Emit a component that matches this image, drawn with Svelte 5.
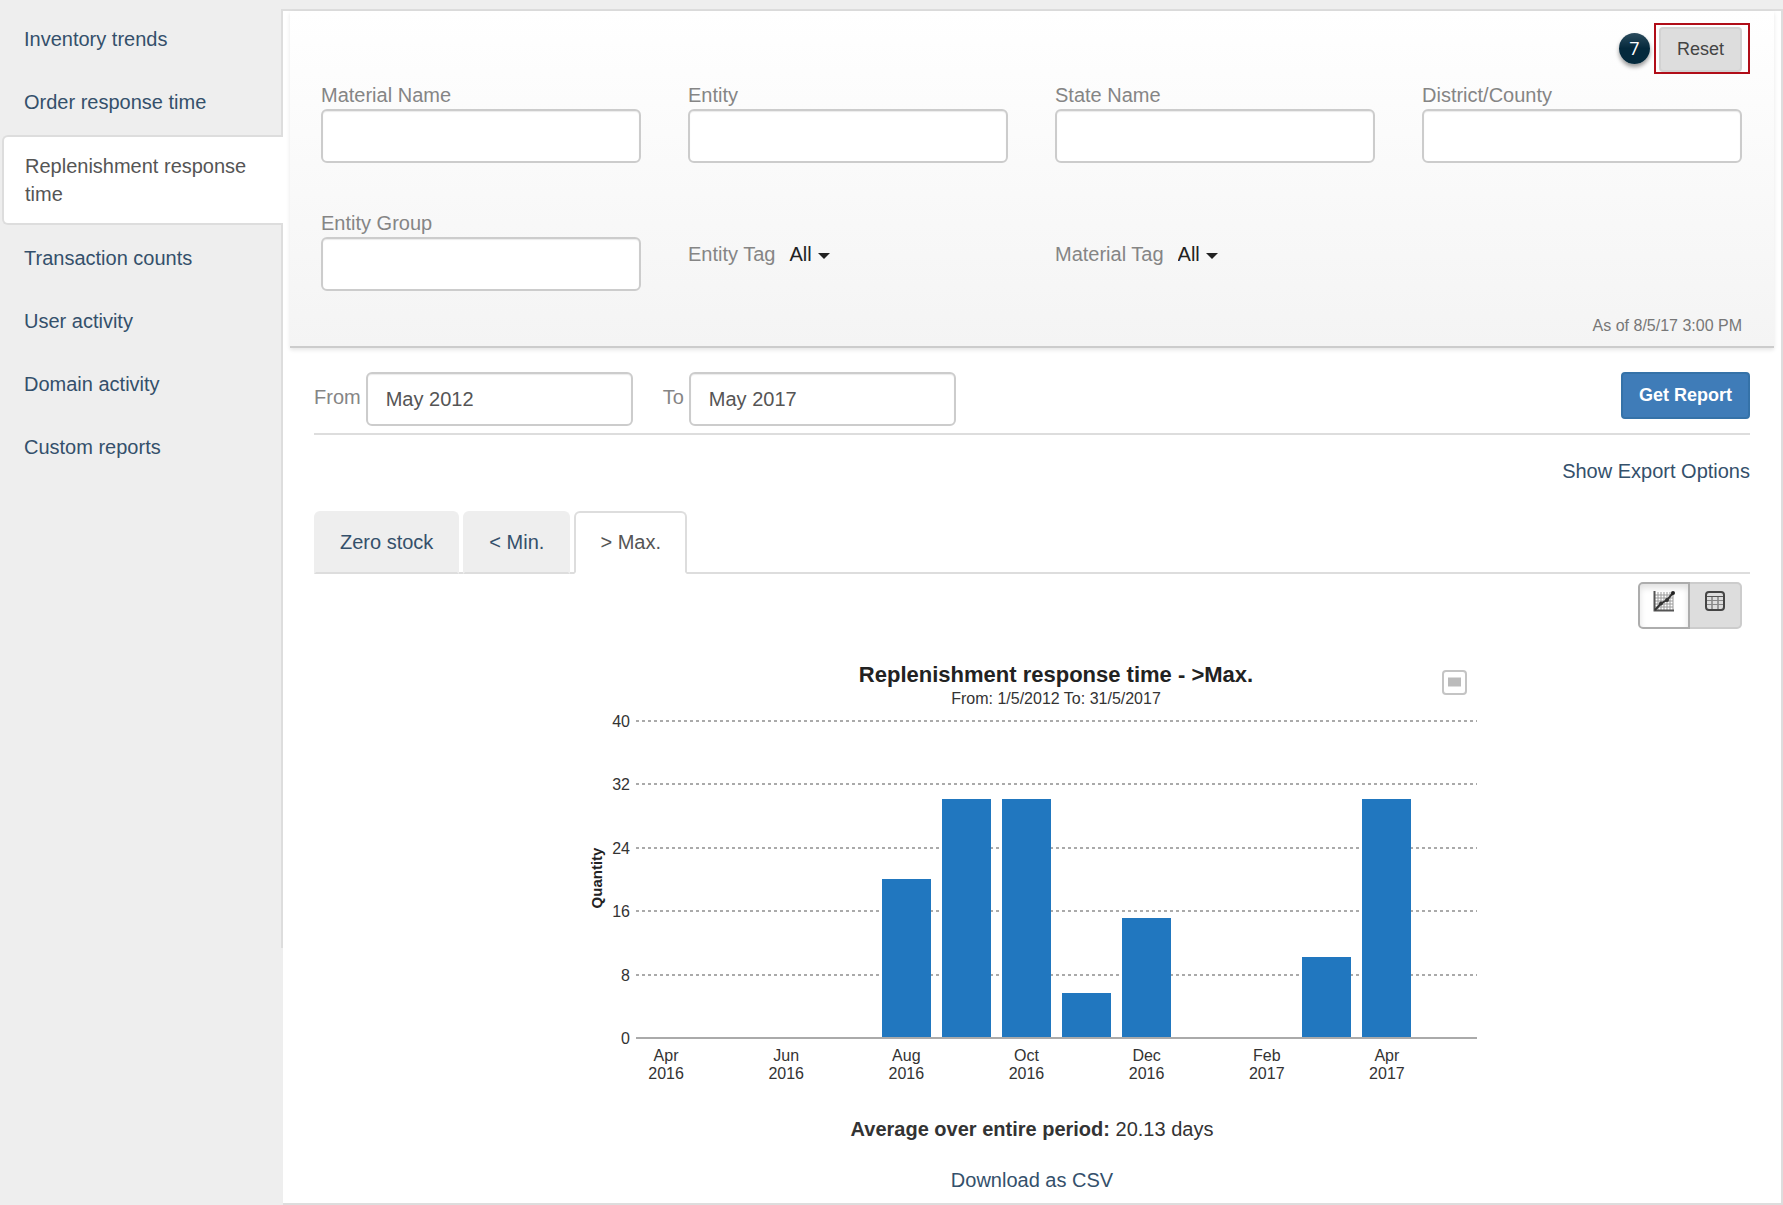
<script>
  const reports = [
    'Inventory trends',
    'Order response time',
    'Replenishment response time',
    'Transaction counts',
    'User activity',
    'Domain activity',
    'Custom reports',
  ];
  const stockTabs = ['Zero stock', '< Min.', '> Max.'];

  let report = $state('Replenishment response time');
  let stockTab = $state('> Max.');
  let view = $state('chart');
  let from = $state('May 2012');
  let to = $state('May 2017');

  const series = [
    { month: 'Apr', year: 2016, value: 0 },
    { month: 'May', year: 2016, value: 0 },
    { month: 'Jun', year: 2016, value: 0 },
    { month: 'Jul', year: 2016, value: 0 },
    { month: 'Aug', year: 2016, value: 20.1 },
    { month: 'Sep', year: 2016, value: 30.1 },
    { month: 'Oct', year: 2016, value: 30.1 },
    { month: 'Nov', year: 2016, value: 5.7 },
    { month: 'Dec', year: 2016, value: 15.1 },
    { month: 'Jan', year: 2017, value: 0 },
    { month: 'Feb', year: 2017, value: 0 },
    { month: 'Mar', year: 2017, value: 10.2 },
    { month: 'Apr', year: 2017, value: 30.1 },
    { month: 'May', year: 2017, value: 0 },
  ];

  const plot = { left: 54, right: 895, top: 70, bottom: 387 };
  const ticks = [0, 8, 16, 24, 32, 40];
  const step = (plot.right - plot.left) / series.length;
  const barWidth = 49;

  const y = (v) => Math.round(plot.bottom - (v / 40) * (plot.bottom - plot.top));
  const cx = (i) => plot.left + step * (i + 0.5);

  function go(e, fn) {
    e.preventDefault();
    fn();
  }
</script>

<div class="layout">
  <nav class="sidebar">
    {#each reports as r}
      <a href="#report" class="report" class:active={r === report} onclick={(e) => go(e, () => (report = r))}>{r}</a>
    {/each}
  </nav>

  <main class="content">
    <form class="filters" onsubmit={(e) => e.preventDefault()}>
      <div class="reset-row">
        <span class="callout">7</span>
        <div class="highlight">
          <button type="reset" class="btn">Reset</button>
        </div>
      </div>

      <div class="fields">
        <div class="field"><label for="material">Material Name</label><input id="material" type="text" /></div>
        <div class="field"><label for="entity">Entity</label><input id="entity" type="text" /></div>
        <div class="field"><label for="state">State Name</label><input id="state" type="text" /></div>
        <div class="field"><label for="district">District/County</label><input id="district" type="text" /></div>
        <div class="field"><label for="group">Entity Group</label><input id="group" type="text" /></div>
        <div class="tag">
          <label for="entity-tag">Entity Tag</label>
          <select id="entity-tag"><option>All</option></select>
          <span class="caret"></span>
        </div>
        <div class="tag">
          <label for="material-tag">Material Tag</label>
          <select id="material-tag"><option>All</option></select>
          <span class="caret"></span>
        </div>
      </div>

      <p class="as-of">As of 8/5/17 3:00 PM</p>
    </form>

    <div class="body">
      <div class="period">
        <div class="date"><label for="from">From</label><input id="from" type="text" bind:value={from} /></div>
        <div class="date"><label for="to">To</label><input id="to" type="text" bind:value={to} /></div>
        <button type="button" class="btn primary">Get Report</button>
      </div>

      <div class="export"><a href="#export">Show Export Options</a></div>

      <div class="tabs">
        {#each stockTabs as t}
          <a href="#tab" class="tab" class:active={t === stockTab} onclick={(e) => go(e, () => (stockTab = t))}>{t}</a>
        {/each}
      </div>

      <div class="views">
        <button type="button" class="view" class:active={view === 'chart'} aria-label="Chart view" onclick={() => (view = 'chart')}>
          <svg width="22" height="22" viewBox="0 0 22 22" fill="none" stroke="#333">
            <path d="M5 2v18M8 2v18M11 2v18M14 2v18M17 2v18M20 5v15M2 5h18M2 8h18M2 11h18M2 14h18M2 17h18" stroke="#999" />
            <path d="M1.5 1v19.5H21" stroke="#555" stroke-width="2" />
            <path d="M2 20L8 13.500 14 10 20 3" stroke-width="2" />
            <circle cx="8" cy="13.5" r="2" fill="#333" stroke="none" />
            <circle cx="14" cy="10" r="2" fill="#333" stroke="none" />
            <circle cx="20" cy="3" r="2" fill="#222" stroke="none" />
          </svg>
        </button>
        <button type="button" class="view" class:active={view === 'table'} aria-label="Table view" onclick={() => (view = 'table')}>
          <svg width="22" height="22" viewBox="0 0 22 22" fill="none" stroke="#444">
            <rect x="2" y="2" width="18" height="18" rx="3" stroke-width="2" />
            <path d="M3 6.5h16M8 7v12M14 7v12" stroke="#555" />
            <path d="M3 10.5h16M3 14.500h16" stroke="#888" />
          </svg>
        </button>
      </div>

      <svg class="chart" viewBox="0 0 900 440" role="img" aria-label="Replenishment response time">
        <text class="title" x="474" y="31">Replenishment response time - &gt;Max.</text>
        <text class="label middle" x="474" y="53">From: 1/5/2012 To: 31/5/2017</text>

        <g class="menu">
          <rect x="861" y="20" width="23" height="23" rx="3" fill="#fff" stroke="#c4c4c4" stroke-width="2" />
          <path d="M866 28h13M866 31h13M866 34h13" stroke="#bbb" stroke-width="3" />
        </g>

        {#each ticks as t}
          <text class="label end" x="48" y={y(t) + 6}>{t}</text>
          {#if t > 0}
            <line class="grid" x1={plot.left} x2={plot.right} y1={y(t)} y2={y(t)} />
          {/if}
        {/each}

        <text class="axis" transform="translate(20 227) rotate(-90)">Quantity</text>

        {#each series as p, i}
          {#if p.value > 0}
            <rect class="bar" x={Math.round(cx(i) - barWidth / 2)} y={y(p.value)} width={barWidth} height={plot.bottom - y(p.value)} />
          {/if}
          {#if i % 2 === 0}
            <text class="label middle" x={cx(i)} y="410">{p.month}</text>
            <text class="label middle" x={cx(i)} y="428">{p.year}</text>
          {/if}
        {/each}
        <line class="base" x1={plot.left} x2={plot.right} y1={plot.bottom} y2={plot.bottom} />
      </svg>

      <p class="average"><strong>Average over entire period:</strong> 20.13 days</p>
      <div class="download"><a href="#csv">Download as CSV</a></div>
    </div>
  </main>
</div>

<style>
  :global(body) {
    margin: 0;
    background: #eee;
  }

  .layout {
    display: grid;
    grid-template-columns: 283px 1fr;
    padding: 9px 0 1px;
    font-family: 'Liberation Sans', Arial, sans-serif;
    font-size: 20px;
    line-height: 28px;
    color: #333;
  }
  .layout * { box-sizing: border-box; }
  p { margin: 0; }
  a {
    color: #34506b;
    text-decoration: none;
  }
  label { color: #858585; }
  input, select, button {
    font-family: inherit;
    font-size: inherit;
    line-height: inherit;
  }

  .sidebar {
    display: flex;
    flex-direction: column;
    gap: 3px;
    align-self: start;
    padding: 0 0 471px 2px;
    border-right: 2px solid #ddd;
  }
  .report {
    padding: 14px 20px;
    border: 2px solid transparent;
  }
  .report.active {
    margin-right: -2px;
    padding: 15px 21px;
    background: #fff;
    border-color: #ddd;
    border-right: 0;
    border-radius: 6px 0 0 6px;
    color: #555;
  }

  .content {
    padding: 0 7px;
    background: #fff;
    border: 2px solid #ddd;
    border-left: 0;
  }

  .filters {
    padding: 12px 24px 8px;
    background: linear-gradient(#fff, #f4f4f4);
    border-bottom: 2px solid #ccc;
    box-shadow: 0 2px 4px rgba(0, 0, 0, 0.1);
  }
  .reset-row {
    display: flex;
    justify-content: flex-end;
    align-items: center;
    gap: 4px;
  }
  .callout {
    width: 31px;
    height: 31px;
    border-radius: 50%;
    background: linear-gradient(#2c4c5e, #04293c 50%);
    box-shadow: 0 3px 4px rgba(0, 0, 0, 0.4);
    color: #fff;
    font-family: 'Open Sans', sans-serif;
    font-size: 18px;
    line-height: 31px;
    text-align: center;
  }
  .highlight {
    padding: 2px 6px 0 3px;
    border: 2px solid #b00d18;
  }
  .btn {
    display: block;
    padding: 7px 16px;
    border: 2px solid #d2d2d2;
    border-radius: 4px;
    background: #ddd;
    color: #444;
    font-size: 18px;
    line-height: 27px;
  }

  .fields {
    display: grid;
    grid-template-columns: repeat(4, 1fr);
    gap: 46px 47px;
    margin: 7px 8px 0 7px;
  }
  .field {
    display: flex;
    flex-direction: column;
  }
  input {
    height: 54px;
    padding: 0 18px;
    border: 2px solid #ccc;
    border-radius: 6px;
    background: #fff;
    box-shadow: inset 0 1px 1px rgba(0, 0, 0, 0.08);
    color: #555;
  }
  .tag {
    display: flex;
    align-items: center;
    padding-top: 8px;
  }
  select {
    field-sizing: content;
    appearance: none;
    margin-left: 14px;
    padding: 0;
    border: 0;
    background: none;
    color: #222;
  }
  .caret {
    margin: 4px 0 0 6px;
    border: 6px solid transparent;
    border-top-color: #222;
    border-bottom: 0;
  }
  .as-of {
    margin: 23px 8px 0;
    color: #777;
    font-size: 16px;
    line-height: 24px;
    text-align: right;
  }

  .body { margin: 24px 24px 9px; }
  .period {
    display: flex;
    align-items: flex-start;
    gap: 30px;
    padding-bottom: 7px;
    border-bottom: 2px solid #ddd;
  }
  .date {
    display: flex;
    align-items: center;
    gap: 5px;
  }
  .date label { padding-bottom: 4px; }
  .date input { width: 267px; }
  .primary {
    margin-left: auto;
    padding: 8px 16px;
    border-color: #3572a8;
    background: #3f7cb8;
    color: #fff;
    font-weight: bold;
  }

  .export {
    margin-top: 22px;
    text-align: right;
  }
  .tabs {
    display: flex;
    gap: 4px;
    margin-top: 26px;
    border-bottom: 2px solid #ddd;
  }
  .tab {
    margin-bottom: -2px;
    padding: 15px 24px 16px;
    border: 2px solid #eee;
    border-bottom-color: #ddd;
    border-radius: 6px 6px 0 0;
    background: #eee;
  }
  .tab.active {
    border-color: #ddd;
    border-bottom-color: #fff;
    background: #fff;
    color: #555;
  }

  .views {
    display: flex;
    justify-content: flex-end;
    margin: 8px 8px 0;
  }
  .view {
    display: flex;
    justify-content: center;
    width: 52px;
    height: 47px;
    padding: 6px 0;
    border: 2px solid #ccc;
    border-left: 0;
    border-radius: 0 5px 5px 0;
    background: #ddd;
  }
  .view:first-child {
    border-left: 2px solid #ccc;
    border-radius: 5px 0 0 5px;
  }
  .view.active {
    border-color: #adadad;
    background: #fff;
    box-shadow: inset 0 4px 6px rgba(0, 0, 0, 0.12);
  }

  .chart {
    display: block;
    width: 900px;
    max-width: 100%;
    margin: 22px auto 0;
  }
  .title {
    font-size: 22px;
    font-weight: bold;
    text-anchor: middle;
    fill: #222;
  }
  .label {
    font-size: 16px;
    fill: #333;
  }
  .middle { text-anchor: middle; }
  .end { text-anchor: end; }
  .axis {
    font-size: 15px;
    font-weight: bold;
    text-anchor: middle;
    fill: #222;
  }
  .grid {
    stroke: #aaa;
    stroke-width: 2;
    stroke-dasharray: 3 3;
  }
  .base {
    stroke: #aaa;
    stroke-width: 2;
  }
  .bar { fill: #2177bf; }

  .average {
    margin-top: 24px;
    text-align: center;
  }
  .download {
    margin-top: 23px;
    text-align: center;
  }
</style>
